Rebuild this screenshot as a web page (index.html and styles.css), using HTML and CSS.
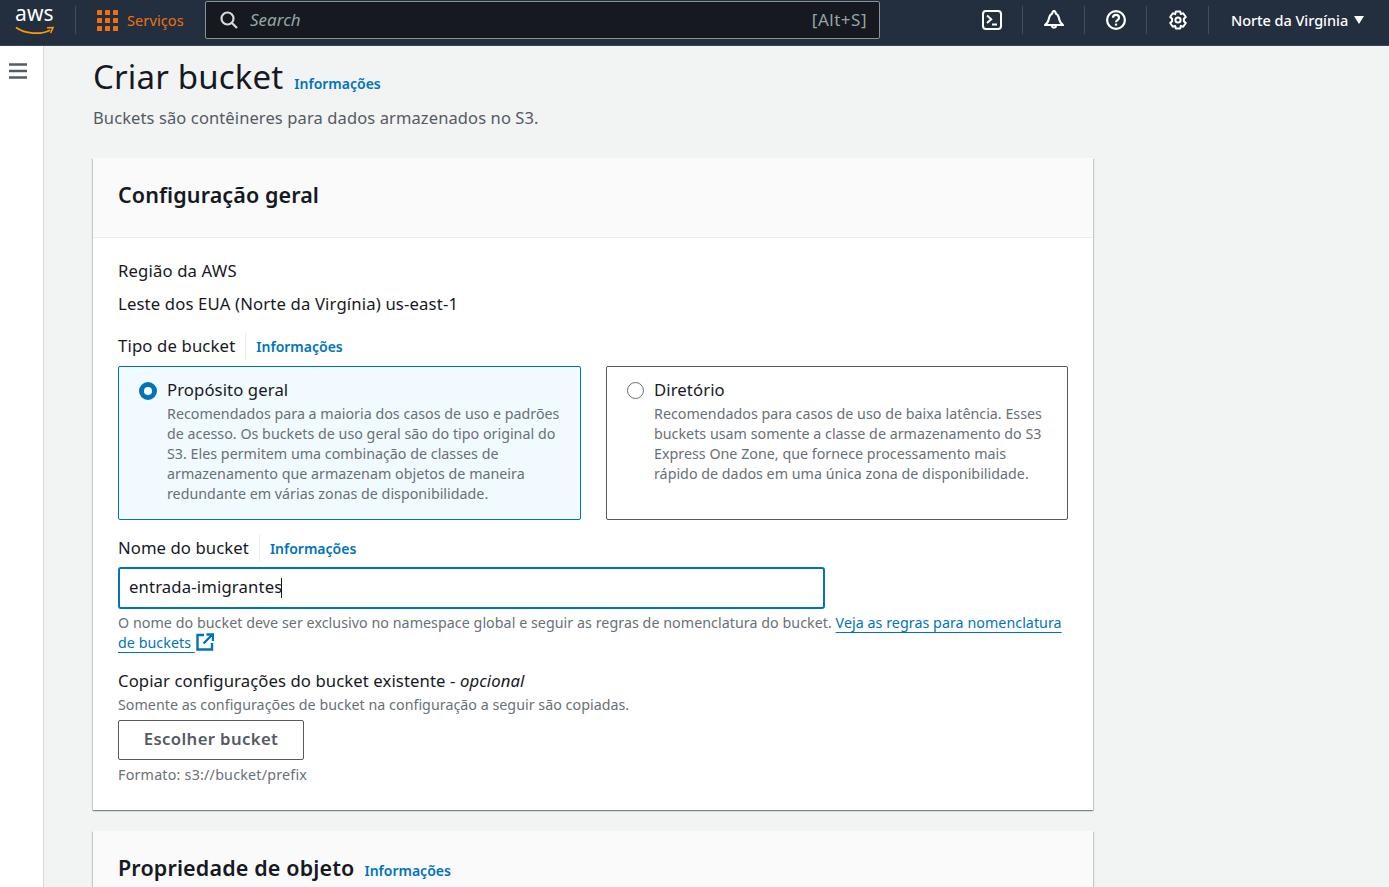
FILE: index.html
```html
<!DOCTYPE html>
<html lang="pt-BR">
<head>
<meta charset="utf-8">
<title>Criar bucket</title>
<link rel="stylesheet" href="styles.css">
</head>
<body>
<header class="topbar">
  <a class="logo">
    <span class="logo-text">aws</span>
    <svg class="smile" width="40" height="10" viewBox="0 0 40 10"><path d="M1 1.500C10 8 26 9 35 4.200" fill="none" stroke="#f90" stroke-width="1.800"/><path d="M32 1.800L38 1.600 35.600 7" fill="none" stroke="#f90" stroke-width="1.600"/></svg>
  </a>
  <span class="sep sep-logo"></span>
  <a class="services">
    <svg width="21" height="21" viewBox="0 0 21 21" fill="#ec7211"><rect width="5" height="5" rx=".6"/><rect x="8" width="5" height="5" rx=".6"/><rect x="16" width="5" height="5" rx=".6"/><rect y="8" width="5" height="5" rx=".6"/><rect x="8" y="8" width="5" height="5" rx=".6"/><rect x="16" y="8" width="5" height="5" rx=".6"/><rect y="16" width="5" height="5" rx=".6"/><rect x="8" y="16" width="5" height="5" rx=".6"/><rect x="16" y="16" width="5" height="5" rx=".6"/></svg>
    <span>Serviços</span>
  </a>
  <div class="search">
    <svg width="18" height="18" viewBox="0 0 18 18" fill="none" stroke="#d5dbdb" stroke-width="2.200"><circle cx="7.500" cy="7.500" r="6"/><path d="M12 12l5 5"/></svg>
    <span class="search-text">Search</span>
    <span class="search-key">[Alt+S]</span>
  </div>
  <nav class="tools">
    <span class="tool"><svg width="20" height="20" viewBox="0 0 20 20" fill="none" stroke="#fff" stroke-width="2"><rect x="1" y="1" width="18" height="18" rx="3"/><path d="M5 5.500l4.200 3.700L5 12.900M10 14.500h5"/></svg></span>
    <span class="tool"><svg width="20" height="20" viewBox="0 0 20 20" fill="none" stroke="#fff" stroke-width="2.200" stroke-linejoin="round"><path d="M1 15h18c-1.800-1.400-3.200-3-3.700-5.500C14.800 6.500 14 4.500 12 3.700 11.500 2 11 1 10 1S8.500 2 8 3.700C6 4.500 5.200 6.500 4.700 9.500 4.200 12 2.800 13.600 1 15z"/><path d="M7.800 16a2.300 2.300 0 0 0 4.400 0"/></svg></span>
    <span class="tool"><svg width="20" height="20" viewBox="0 0 20 20" fill="none" stroke="#fff" stroke-width="2.200"><circle cx="10" cy="10" r="8.900"/><path d="M7 7.800c0-4 6-4 6 0 0 2.300-3 2.200-3 4.400"/><path d="M10 13.600v2"/></svg></span>
    <span class="tool"><svg width="20" height="20" viewBox="0 0 20 20" fill="none" stroke="#fff" stroke-width="2" stroke-linejoin="round"><path d="M7.800 1.500h4.400l.6 2.600 2.400-.8 2.600 3.700-1.900 1.800v2.400l1.900 1.800-2.600 3.700-2.400-.8-.6 2.600H7.800l-.6-2.600-2.400.8-2.600-3.700 1.900-1.800V8.800L2.200 7l2.600-3.700 2.400.8z"/><circle cx="10" cy="10" r="2.600"/></svg></span>
    <span class="tool tool-region">Norte da Virgínia<i class="caret"></i></span>
  </nav>
</header>
<div class="shell">
  <aside class="sidebar">
    <svg width="18" height="16" viewBox="0 0 18 16" fill="none" stroke="#545b64" stroke-width="2.600"><path d="M0 1.500h18M0 8h18M0 14.500h18"/></svg>
  </aside>
  <main class="content">
    <div class="page-title"><h1>Criar bucket</h1><a class="info">Informações</a></div>
    <p class="page-desc">Buckets são contêineres para dados armazenados no S3.</p>

    <section class="card">
      <div class="card-head"><h2>Configuração geral</h2></div>
      <div class="card-body">
        <div class="label">Região da AWS</div>
        <div class="label region-value">Leste dos EUA (Norte da Virgínia) us-east-1</div>
        <div class="label-row"><span class="label">Tipo de bucket</span><a class="info info-div">Informações</a></div>
        <div class="tiles">
          <div class="tile tile-on">
            <span class="radio radio-on"></span>
            <div>
              <div class="tile-title">Propósito geral</div>
              <div class="tile-desc">Recomendados para a maioria dos casos de uso e padrões de acesso. Os buckets de uso geral são do tipo original do S3. Eles permitem uma combinação de classes de armazenamento que armazenam objetos de maneira redundante em várias zonas de disponibilidade.</div>
            </div>
          </div>
          <div class="tile">
            <span class="radio"></span>
            <div>
              <div class="tile-title">Diretório</div>
              <div class="tile-desc">Recomendados para casos de uso de baixa latência. Esses buckets usam somente a classe de armazenamento do S3 Express One Zone, que fornece processamento mais rápido de dados em uma única zona de disponibilidade.</div>
            </div>
          </div>
        </div>
        <div class="label-row name-row"><span class="label label-name">Nome do bucket</span><a class="info info-div">Informações</a></div>
        <div class="input"><span>entrada-imigrantes</span><i class="cursor"></i></div>
        <p class="hint">O nome do bucket deve ser exclusivo no namespace global e seguir as regras de nomenclatura do bucket. <a class="link">Veja as regras para nomenclatura de buckets&nbsp;</a><svg class="ext" width="18" height="18" viewBox="0 0 18 18" fill="none" stroke="#0073bb" stroke-width="2.400"><path d="M8 2H1.500v14.500H16V10"/><path d="M7.500 10.500L16 2M10.500 1.500h6.500V8"/></svg></p>
        <div class="label copy-label">Copiar configurações do bucket existente - <em>opcional</em></div>
        <p class="hint hint-copy">Somente as configurações de bucket na configuração a seguir são copiadas.</p>
        <button class="btn" type="button">Escolher bucket</button>
        <p class="hint hint-format">Formato: s3://bucket/prefix</p>
      </div>
    </section>

    <section class="card card-next">
      <div class="card-head card-head-next"><h2 class="h2-next">Propriedade de objeto</h2><a class="info">Informações</a></div>
    </section>
  </main>
</div>
</body>
</html>
```
FILE: styles.css
```css
* { box-sizing: border-box; }
html, body { margin: 0; height: 887px; overflow: hidden; }
body { font-family: "Noto Sans", "Open Sans", sans-serif; font-size: 16px; color: #16191f; background: #f2f3f3; }
h1, h2, p { margin: 0; font-weight: inherit; }

.topbar { height: 46px; padding-bottom: 5px; background: #232f3e; border-bottom: 1px solid #3b4552; display: flex; align-items: center; color: #fff; }
.logo { width: 40px; margin-left: 15px; height: 34px; position: relative; display: block; }
.logo-text { display: block; font-size: 21px; line-height: 26px; letter-spacing: .1px; margin-top: -3px; color: #fff; }
.smile { position: absolute; left: 0; top: 23px; }
.sep { width: 1px; background: #414d5c; display: block; }
.sep-logo { height: 28px; margin-left: 20px; }
.services { display: flex; align-items: center; gap: 9px; margin-left: 21px; color: #ec7211; font-size: 14.500px; letter-spacing: .1px; width: 88px; flex: none; white-space: nowrap; }
.search { width: 675px; height: 38px; margin-left: 20px; background: #16191f; border: 1px solid #879596; border-radius: 2px; display: flex; align-items: center; padding: 0 12px 0 14px; flex: none; }
.search-text { font-style: italic; color: #95a5a6; margin-left: 12px; font-size: 17px; flex: 1; line-height: 22px; padding-bottom: 1px; }
.search-key { color: #95a5a6; font-size: 17px; letter-spacing: .5px; line-height: 22px; padding-bottom: 1px; }
.tools { display: flex; align-items: center; margin-left: 81px; }
.tool { height: 28px; width: 62px; border-left: 1px solid #414d5c; display: flex; align-items: center; justify-content: center; }
.tool:first-child { border-left: 0; width: 61px; }
.tool-region { width: auto; padding-left: 22px; font-size: 14.500px; font-weight: 500; letter-spacing: -.05px; white-space: pre; justify-content: flex-start; }
.caret { display: inline-block; width: 0; height: 0; border: 5.500px solid transparent; border-top: 8px solid #fff; border-bottom: 0; margin-left: 6px; }

.shell { display: flex; height: 841px; }
.sidebar { width: 44px; flex: none; background: #fff; border-right: 1px solid #d5dbdb; padding: 17px 0 0 9px; }
.sidebar svg { display: block; }
.content { width: 1000px; margin-left: 49px; flex: none; }

.page-title { display: flex; align-items: baseline; gap: 11px; margin-top: 8px; }
h1 { font-size: 33px; line-height: 45px; letter-spacing: .16px; }
.info { color: #0073bb; font-size: 14px; font-weight: 600; }
.page-desc { font-size: 16.500px; line-height: 22px; color: #545b64; margin-top: 8px; letter-spacing: .11px; }

.card { background: #fff; margin-top: 29px; box-shadow: 0 1px 1px 0 rgba(0,28,36,.3), 1px 1px 1px 0 rgba(0,28,36,.15), -1px 1px 1px 0 rgba(0,28,36,.15); }
.card-head { height: 80px; background: #fafafa; border-bottom: 1px solid #eaeded; padding: 22px 25px 0; }
h2 { font-size: 21.500px; line-height: 30px; font-weight: 600; letter-spacing: .1px; }
.h2-next { letter-spacing: .14px; }
.card-body { padding: 22px 25px 26px; height: 572px; }
.label { font-size: 16.700px; line-height: 22px; letter-spacing: .15px; }
.label-name { letter-spacing: .08px; }
.region-value { margin-top: 11px; }
.label-row { display: flex; align-items: center; margin-top: 20px; height: 22px; }
.info-div { border-left: 1px solid #eaeded; margin-left: 10px; padding: 2px 0 0 10px; line-height: 26px; }
.tiles { display: grid; grid-template-columns: 463px 462px; gap: 25px; margin-top: 9px; }
.tile { height: 154px; border: 1px solid #545b64; border-radius: 2px; padding: 12px 18px 0 20px; display: flex; gap: 10px; background: #fff; }
.tile-on { border-color: #0073bb; background: #f1faff; }
.radio { width: 17px; height: 17px; border: 1.500px solid #687078; border-radius: 50%; flex: none; margin-top: 3px; }
.radio-on { width: 18px; height: 18px; border: 5px solid #0073bb; background: #fff; }
.tile-title { font-size: 16.700px; line-height: 21px; letter-spacing: .1px; }
.tile-desc { font-size: 14.250px; line-height: 20px; color: #687078; margin-top: 4px; letter-spacing: .02px; }
.name-row { margin-top: 17px; }
.input { margin-top: 8px; width: 707px; height: 42px; border: 2px solid #0073bb; border-radius: 3px; padding: 0 9px 4px; display: flex; align-items: center; font-size: 16.700px; letter-spacing: .14px; margin-bottom: 4px; }
.cursor { width: 1px; height: 20px; background: #16191f; margin: 4px 0 0 -1px; }
.hint { font-size: 14.250px; line-height: 20px; color: #687078; letter-spacing: .05px; }
.link { color: #0073bb; text-decoration: underline; text-underline-offset: 4px; }
.ext { vertical-align: -3px; margin-left: 1px; }
.copy-label { margin-top: 17px; letter-spacing: .09px; }
.hint-copy { margin-top: 3px; letter-spacing: .03px; }
.btn { display: block; margin-top: 5px; width: 186px; height: 40px; padding: 0 0 4px; background: #fff; border: 1px solid #545b64; border-radius: 2px; color: #545b64; font: 600 16.700px "Noto Sans", sans-serif; letter-spacing: .38px; }
.hint-format { margin-top: 5px; letter-spacing: .23px; }
.card-next { margin-top: 21px; height: 200px; }
.card-head-next { display: flex; align-items: baseline; gap: 10px; height: 80px; padding-top: 22px; }
```
